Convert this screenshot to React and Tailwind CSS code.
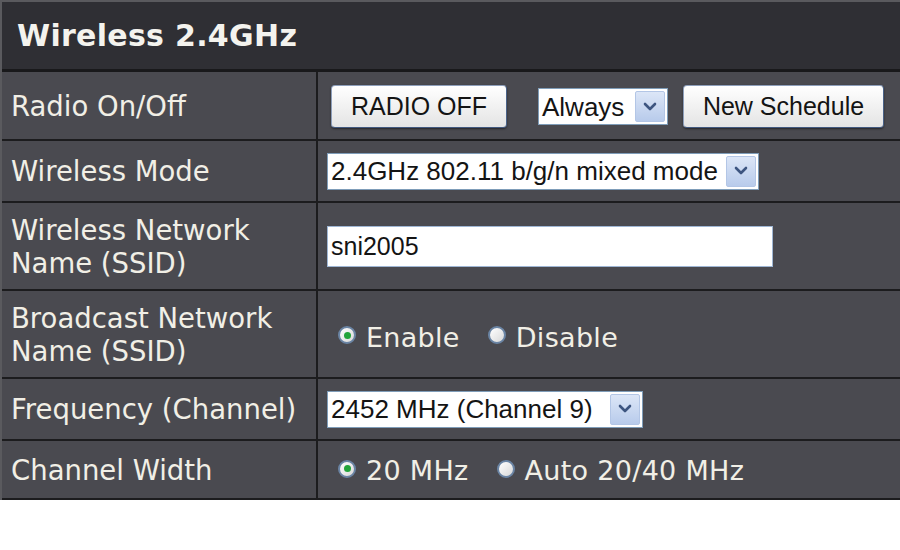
import React from 'react';

const LABEL_FONT = { fontFamily: '"DejaVu Sans", Verdana, sans-serif' };
const CTRL_FONT = { fontFamily: '"Liberation Sans", Arial, sans-serif' };

function Chevron() {
  return (
    <svg width="16" height="12" viewBox="0 0 16 12">
      <path d="M3 3 L8 8 L13 3" fill="none" stroke="#3d5580" strokeWidth="2.6" strokeLinecap="round" strokeLinejoin="round" />
    </svg>
  );
}

function Select({ value, width }) {
  return (
    <div className={`flex items-center justify-between h-[37px] bg-white border border-[#7f9db9] pl-[3px] pr-[2px] ${width}`} style={CTRL_FONT}>
      <span className="text-[26px] leading-none text-[#141414] whitespace-nowrap">{value}</span>
      <div className="w-[30px] h-[31px] flex items-center justify-center rounded-[2px] border border-[#b3c6e6] bg-gradient-to-b from-[#dce6f7] to-[#b8cbeb]">
        <Chevron />
      </div>
    </div>
  );
}

function Button({ children, width }) {
  return (
    <div className={`h-[43px] flex items-center justify-center rounded-[4px] border border-[#8e9fbb] border-b-[#42597f] border-r-[#4a6288] bg-gradient-to-b from-white to-[#e4e4e4] shadow-[0_1px_2px_rgba(0,0,0,0.5)] ${width}`} style={CTRL_FONT}>
      <span className="text-[25px] leading-none text-[#141414]">{children}</span>
    </div>
  );
}

function Radio({ checked, label, gapAfter }) {
  return (
    <div className={`flex items-center ${gapAfter}`}>
      <div className="w-[18px] h-[18px] rounded-full bg-gradient-to-br from-white to-[#d8d8d8] border-2 border-[#6a84a4] flex items-center justify-center mt-[-4px]">
        {checked && <div className="w-[7px] h-[7px] rounded-full bg-[#22a43a]" />}
      </div>
      <span className="ml-[10px] text-[27px] leading-none tracking-[0.3px] text-[#f1efe6]" style={LABEL_FONT}>{label}</span>
    </div>
  );
}

function Row({ label, height, children }) {
  return (
    <div className={`flex border-b-2 border-[#1c1c1e] ${height}`}>
      <div className="w-[316px] shrink-0 border-r-2 border-[#1c1c1e] flex flex-col justify-center pl-[9px] pt-[1px]" style={LABEL_FONT}>
        {label.map((l) => (
          <div key={l} className="text-[27.5px] leading-[33px] text-[#f1efe6] whitespace-nowrap">{l}</div>
        ))}
      </div>
      <div className="flex-1 flex items-center pl-[9px]">{children}</div>
    </div>
  );
}

export default function App() {
  return (
    <div className="w-[900px] h-[550px] bg-white overflow-hidden">
      <div className="bg-[#4a4a50] border-t-2 border-l-2 border-[#5a5a5e]">
        <div className="h-[70px] bg-[#2f2f34] border-b-[3px] border-[#19191b] flex items-center pl-[15px]">
          <span className="text-[30px] font-bold text-[#f4f3ee] tracking-[0.3px]" style={LABEL_FONT}>Wireless 2.4GHz</span>
        </div>

        <Row label={['Radio On/Off']} height="h-[69px]">
          <div className="flex items-center ml-[4px] mt-[2px]">
            <Button width="w-[176px]">RADIO OFF</Button>
            <div className="ml-[31px]"><Select value="Always" width="w-[130px]" /></div>
            <div className="ml-[15px]"><Button width="w-[201px]">New Schedule</Button></div>
          </div>
        </Row>

        <Row label={['Wireless Mode']} height="h-[62px]">
          <Select value="2.4GHz 802.11 b/g/n mixed mode" width="w-[432px]" />
        </Row>

        <Row label={['Wireless Network', 'Name (SSID)']} height="h-[88px]">
          <div className="w-[446px] h-[41px] bg-white border border-[#9fb6d4] flex items-center pl-[3px]" style={CTRL_FONT}>
            <span className="text-[25px] leading-none text-[#141414]">sni2005</span>
          </div>
        </Row>

        <Row label={['Broadcast Network', 'Name (SSID)']} height="h-[88px]">
          <div className="flex items-center ml-[11px] mt-[6px]">
            <Radio checked label="Enable" gapAfter="mr-[28px]" />
            <Radio label="Disable" />
          </div>
        </Row>

        <Row label={['Frequency (Channel)']} height="h-[62px]">
          <Select value="2452 MHz (Channel 9)" width="w-[316px]" />
        </Row>

        <Row label={['Channel Width']} height="h-[59px]">
          <div className="flex items-center ml-[11px] mt-[2px]">
            <Radio checked label="20 MHz" gapAfter="mr-[28px]" />
            <Radio label="Auto 20/40 MHz" />
          </div>
        </Row>
      </div>
    </div>
  );
}
